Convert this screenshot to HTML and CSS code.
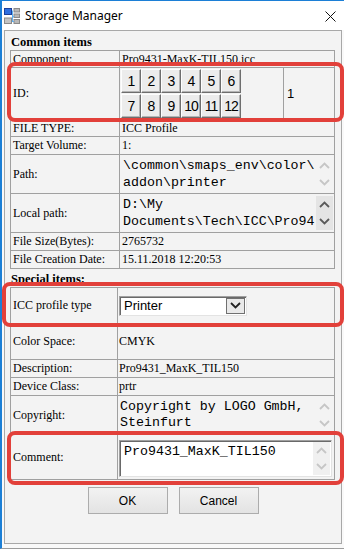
FILE: index.html
```html
<!DOCTYPE html>
<html lang="en">
<head>
    <meta charset="UTF-8">
    <meta name="viewport" content="width=device-width, initial-scale=1.0">
    <title>Storage Manager</title>
    <link rel="stylesheet" href="styles.css">
</head>
<body>
    <div class="window">
        <div class="titlebar">
            <svg class="app-icon" width="16" height="16" viewBox="0 0 16 16">
                <rect x="0.5" y="0.5" width="7" height="6" fill="#2f6fe0" stroke="#1b3f9a"/>
                <rect x="10" y="0.5" width="5.5" height="3.5" fill="#b8b8b8" stroke="#8a8a8a"/>
                <rect x="10" y="6" width="5.5" height="3.5" fill="#b8b8b8" stroke="#8a8a8a"/>
                <rect x="10" y="11.5" width="5.5" height="4" fill="#b8b8b8" stroke="#8a8a8a"/>
                <rect x="0.5" y="10" width="7" height="5.5" fill="#c4c4c4" stroke="#8a8a8a"/>
                <path d="M8 8.5H10M8.5 2.5V13.5M8 13.5H10" stroke="#5fb0f0" fill="none"/>
            </svg>
            <span class="title">Storage Manager</span>
            <svg class="close" width="11" height="11" viewBox="0 0 11 11">
                <path d="M0.5 0.5L10.5 10.5M10.5 0.5L0.5 10.5" stroke="#111" stroke-width="1"/>
            </svg>
        </div>

        <div class="client">
            <div class="panel">
                <div class="section-title">Common items</div>
                <table class="props common">
                    <colgroup>
                        <col class="col-label">
                        <col class="col-value">
                        <col class="col-extra">
                    </colgroup>
                    <tr class="r17">
                        <td>Component:</td>
                        <td colspan="2">Pro9431-MaxK-TIL150.icc</td>
                    </tr>
                    <tr class="r-id">
                        <td>ID:</td>
                        <td class="id-cell">
                            <div class="id-grid">
                                <span class="id-btn">1</span>
                                <span class="id-btn">2</span>
                                <span class="id-btn">3</span>
                                <span class="id-btn">4</span>
                                <span class="id-btn">5</span>
                                <span class="id-btn">6</span>
                                <span class="id-btn">7</span>
                                <span class="id-btn">8</span>
                                <span class="id-btn">9</span>
                                <span class="id-btn">10</span>
                                <span class="id-btn">11</span>
                                <span class="id-btn">12</span>
                            </div>
                        </td>
                        <td class="id-value">1</td>
                    </tr>
                    <tr class="r17">
                        <td>FILE TYPE:</td>
                        <td colspan="2">ICC Profile</td>
                    </tr>
                    <tr>
                        <td>Target Volume:</td>
                        <td colspan="2">1:</td>
                    </tr>
                    <tr class="r-memo">
                        <td>Path:</td>
                        <td colspan="2" class="memo-cell">
                            <div class="memo">
                                <div class="memo-text">\common\smaps_env\color\addon\printer</div>
                                <div class="scroll">
                                    <svg width="11" height="7" viewBox="0 0 11 7"><path d="M1 6L5.5 1.5L10 6" /></svg>
                                    <svg width="11" height="7" viewBox="0 0 11 7"><path d="M1 1L5.5 5.5L10 1" /></svg>
                                </div>
                            </div>
                        </td>
                    </tr>
                    <tr class="r-memo">
                        <td>Local path:</td>
                        <td colspan="2" class="memo-cell">
                            <div class="memo">
                                <div class="memo-text">D:\My Documents\Tech\ICC\Pro94</div>
                                <div class="scroll active">
                                    <svg width="11" height="7" viewBox="0 0 11 7"><path d="M1 6L5.5 1.5L10 6" /></svg>
                                    <svg width="11" height="7" viewBox="0 0 11 7"><path d="M1 1L5.5 5.5L10 1" /></svg>
                                </div>
                            </div>
                        </td>
                    </tr>
                    <tr>
                        <td>File Size(Bytes):</td>
                        <td colspan="2">2765732</td>
                    </tr>
                    <tr>
                        <td>File Creation Date:</td>
                        <td colspan="2">15.11.2018 12:20:53</td>
                    </tr>
                </table>

                <div class="section-title special">Special items:</div>
                <table class="props special">
                    <colgroup>
                        <col class="col-label-sm">
                        <col class="col-value-lg">
                    </colgroup>
                    <tr class="r36">
                        <td>ICC profile type</td>
                        <td class="combo-cell">
                            <div class="combo">
                                <span class="combo-text">Printer</span>
                                <span class="combo-btn">
                                    <svg width="11" height="7" viewBox="0 0 11 7"><path d="M1 1L5.5 5.5L10 1" /></svg>
                                </span>
                            </div>
                        </td>
                    </tr>
                    <tr class="r36">
                        <td>Color Space:</td>
                        <td>CMYK</td>
                    </tr>
                    <tr>
                        <td>Description:</td>
                        <td>Pro9431_MaxK_TIL150</td>
                    </tr>
                    <tr>
                        <td>Device Class:</td>
                        <td>prtr</td>
                    </tr>
                    <tr class="r-copy">
                        <td>Copyright:</td>
                        <td class="memo-cell">
                            <div class="memo">
                                <div class="memo-text copy">Copyright by LOGO GmbH, Steinfurt</div>
                                <div class="scroll">
                                    <svg width="11" height="7" viewBox="0 0 11 7"><path d="M1 6L5.5 1.5L10 6" /></svg>
                                    <svg width="11" height="7" viewBox="0 0 11 7"><path d="M1 1L5.5 5.5L10 1" /></svg>
                                </div>
                            </div>
                        </td>
                    </tr>
                    <tr class="r-comment">
                        <td>Comment:</td>
                        <td class="memo-cell">
                            <div class="memo edit">
                                <div class="memo-text">Pro9431_MaxK_TIL150</div>
                                <div class="scroll">
                                    <svg width="11" height="7" viewBox="0 0 11 7"><path d="M1 6L5.5 1.5L10 6" /></svg>
                                    <svg width="11" height="7" viewBox="0 0 11 7"><path d="M1 1L5.5 5.5L10 1" /></svg>
                                </div>
                            </div>
                        </td>
                    </tr>
                </table>

                <div class="actions">
                    <button class="btn">OK</button>
                    <button class="btn">Cancel</button>
                </div>
            </div>
        </div>

        <!-- highlight marks drawn over the dialog -->
        <div class="mark mark-id"></div>
        <div class="mark mark-icc"></div>
        <div class="mark mark-comment"></div>
    </div>
</body>
</html>
```

FILE: styles.css
```css
* {
    box-sizing: border-box;
}
body {
    margin: 0;
    background-color: #fff;
}
.window {
    position: relative;
    width: 344px;
    height: 549px;
    border-top: 1px solid #1c7fd6;
    border-left: 2px solid #1c7fd6;
    border-bottom: 1px solid #9c9c9c;
    background-color: #f9f9f9;
    font-family: "Liberation Serif", serif;
    font-size: 12px;
    color: #000;
    overflow: hidden;
}
.titlebar {
    height: 29px;
    display: flex;
    align-items: center;
    background-color: #fff;
    padding-left: 2px;
    padding-right: 8px;
}
.app-icon {
    margin-top: 1px;
}
.title {
    margin-left: 5px;
    font-family: "Noto Sans", sans-serif;
    font-size: 12px;
    color: #000;
}
.close {
    margin-left: auto;
    margin-top: 1px;
}
.client {
    padding: 0 2px 4px 2px;
}
.panel {
    height: 514px;
    border: 1px solid #a8a8a8;
    background-color: #f3f3f3;
    padding: 0 5px;
}
.section-title {
    height: 19px;
    padding: 3px 0 0 1px;
    line-height: 16px;
    font-size: 12.5px;
    font-weight: bold;
}
.section-title.special {
    height: 18px;
    padding-top: 2px;
}

/* property tables */
.props {
    width: 325px;
    table-layout: fixed;
    border-collapse: separate;
    border-spacing: 0;
    border-top: 1px solid #a0a0a0;
    border-left: 1px solid #a0a0a0;
}
.props td {
    height: 18px;
    padding: 0 2px;
    border-right: 1px solid #a0a0a0;
    border-bottom: 1px solid #a0a0a0;
    line-height: 15px;
    vertical-align: middle;
    white-space: nowrap;
    overflow: hidden;
}
.col-label {
    width: 109px;
}
.col-value {
    width: 164px;
}
.col-extra {
    width: 51px;
}
.col-label-sm {
    width: 107px;
}
.col-value-lg {
    width: 217px;
}
.props.special td + td {
    padding-left: 1px;
}
.props tr.r17 td {
    height: 17px;
}
.props tr.r-id td {
    height: 52px;
}
.props tr.r-memo td {
    height: 39px;
}
.props tr.r36 td {
    height: 36px;
}
.props tr.r-copy td {
    height: 37px;
}
.props tr.r-comment td {
    height: 45px;
}

/* ID buttons */
.props td.id-cell {
    padding: 1px 0 0 1px;
    vertical-align: top;
}
.id-grid {
    display: grid;
    grid-template-columns: repeat(6, 20px);
    grid-auto-rows: 24px;
    row-gap: 1px;
}
.id-btn {
    display: flex;
    align-items: center;
    justify-content: center;
    padding-top: 1px;
    font-family: "Liberation Sans", sans-serif;
    font-size: 14px;
    letter-spacing: -1px;
    background-color: #ececec;
    border-top: 1px solid #fdfdfd;
    border-left: 1px solid #fdfdfd;
    border-right: 1px solid #6e6e6e;
    border-bottom: 1px solid #6e6e6e;
    box-shadow: inset -1px -1px 0 #b4b4b4;
}
.props td.id-value {
    padding-left: 3px;
    font-family: "Liberation Sans", sans-serif;
    font-size: 13px;
}

/* multi-line read-only fields */
.props td.memo-cell {
    padding: 0;
    white-space: normal;
}
.memo {
    display: flex;
    height: 38px;
}
.memo-text {
    flex: 1;
    overflow: hidden;
    white-space: pre-wrap;
    overflow-wrap: anywhere;
    padding: 2px 0 0 3px;
    font-family: "Liberation Mono", monospace;
    font-size: 13.3px;
    line-height: 17px;
}
.memo-text.copy {
    padding: 3px 0 0 1px;
    line-height: 16px;
}
.scroll {
    flex: none;
    width: 17px;
    margin: 2px 1px 2px 0;
    display: flex;
    flex-direction: column;
    justify-content: space-around;
    align-items: center;
}
.scroll svg path {
    fill: none;
    stroke: #c6c6c6;
    stroke-width: 1.8;
}
.scroll.active {
    background-color: #e4e4e4;
}
.scroll.active svg path {
    stroke: #5a5a5a;
}
.memo.edit {
    height: 37px;
    margin: 3px 2px 0 0;
    background-color: #fff;
    border-top: 1px solid #a0a0a0;
    border-left: 1px solid #a0a0a0;
    border-right: 1px solid #e3e3e3;
    border-bottom: 1px solid #e3e3e3;
    box-shadow: inset 1px 1px 0 #696969;
}
.memo.edit .memo-text {
    padding: 2px 0 0 4px;
}
.memo.edit .scroll {
    margin: 1px 1px 1px 0;
    background-color: #f0f0f0;
}

/* combo box */
.props td.combo-cell {
    padding: 0;
}
.combo {
    width: 128px;
    height: 20px;
    display: flex;
    align-items: center;
    background-color: #fff;
    border-top: 1px solid #a0a0a0;
    border-left: 1px solid #a0a0a0;
    border-right: 1px solid #e3e3e3;
    border-bottom: 1px solid #e3e3e3;
    box-shadow: inset 1px 1px 0 #696969;
    padding: 0 1px 0 4px;
}
.combo-text {
    flex: 1;
    font-family: "Liberation Sans", sans-serif;
    font-size: 13px;
}
.combo-btn {
    width: 19px;
    height: 16px;
    display: flex;
    align-items: center;
    justify-content: center;
    border: 1px solid #707070;
    background-color: #e9e9e9;
}
.combo-btn svg path {
    fill: none;
    stroke: #222;
    stroke-width: 1.8;
}

/* dialog buttons */
.actions {
    display: flex;
    justify-content: center;
    gap: 11px;
    margin-top: 7px;
}
.btn {
    width: 80px;
    height: 27px;
    font-family: "Liberation Sans", sans-serif;
    font-size: 12px;
    color: #000;
    border: 1px solid #acacac;
    background: linear-gradient(#f2f2f2, #e3e3e3);
    padding: 0;
}

/* red annotation frames */
.mark {
    position: absolute;
    border: 4px solid #e2403a;
    border-radius: 8px;
    pointer-events: none;
}
.mark-id {
    left: 5px;
    top: 61px;
    width: 337px;
    height: 60px;
}
.mark-icc {
    left: 0;
    top: 281px;
    width: 342px;
    height: 45px;
}
.mark-comment {
    left: 5px;
    top: 430px;
    width: 337px;
    height: 54px;
}
```
